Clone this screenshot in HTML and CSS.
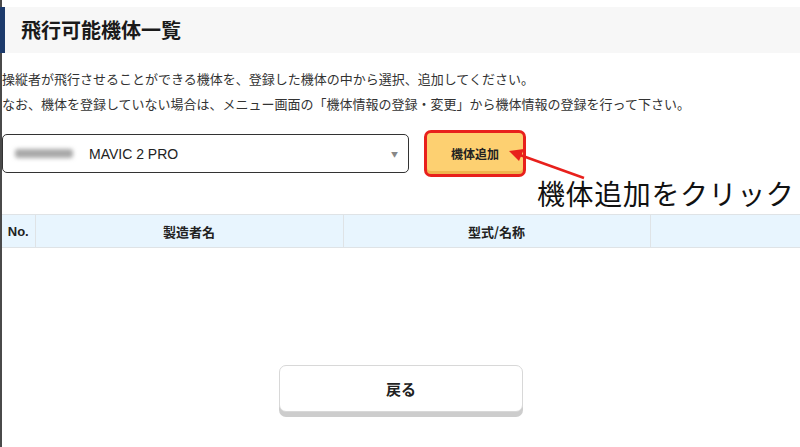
FILE: index.html
```html
<!DOCTYPE html>
<html lang="ja">
<head>
  <meta charset="utf-8">
  <title>飛行可能機体一覧</title>
  <link rel="stylesheet" href="styles.css">
</head>
<body>
  <div class="page">
    <h1 class="page-title">飛行可能機体一覧</h1>

    <p class="lead">
      操縦者が飛行させることができる機体を、登録した機体の中から選択、追加してください。<br>
      なお、機体を登録していない場合は、メニュー画面の「機体情報の登録・変更」から機体情報の登録を行って下さい。
    </p>

    <div class="picker">
      <div class="select">
        <span class="maker"></span>
        <span class="model">MAVIC 2 PRO</span>
        <span class="caret">▼</span>
      </div>
      <button class="add-btn">機体追加</button>
    </div>

    <table class="list">
      <thead>
        <tr>
          <th class="col-no">No.</th>
          <th class="col-maker">製造者名</th>
          <th class="col-model">型式/名称</th>
          <th></th>
        </tr>
      </thead>
      <tbody>
        <tr class="empty"><td colspan="4"></td></tr>
      </tbody>
    </table>

    <div class="footer">
      <button class="back-btn">戻る</button>
    </div>

    <!-- callout pointing at the add button -->
    <svg class="callout-arrow" width="800" height="447" viewBox="0 0 800 447">
      <line x1="584" y1="178" x2="520" y2="155" stroke="#e8201c" stroke-width="2.5"/>
      <polygon points="509,151 524,149 519,161" fill="#e8201c"/>
    </svg>
    <div class="callout">機体追加をクリック</div>
  </div>
</body>
</html>
```

FILE: styles.css
```css
* {
  box-sizing: border-box;
}
body {
  margin: 0;
  background: #fff;
  color: #222;
  font-family: "Noto Sans CJK JP", "Liberation Sans", sans-serif;
}
.page {
  position: relative;
  min-height: 447px;
  padding-top: 7px;
  border-left: 2px solid #4a4a4a;
}
.page-title {
  margin: 0 0 0 -2px;
  height: 46px;
  padding-left: 16px;
  background: #f7f7f7;
  border-left: 5px solid #1c3a6b;
  font-size: 20px;
  font-weight: bold;
  line-height: 46px;
  color: #1a1a1a;
}
.lead {
  margin: 13px 0 0;
  font-size: 13px;
  line-height: 25px;
  color: #333;
}
.picker {
  display: flex;
  align-items: center;
  gap: 15px;
  margin-top: 14px;
  height: 47px;
}
.select {
  display: flex;
  align-items: center;
  width: 407px;
  height: 39px;
  padding: 0 10px 0 12px;
  border: 1px solid #333;
  border-radius: 5px;
  background: #fff;
}
/* maker name is masked */
.maker {
  width: 58px;
  height: 9px;
  border-radius: 3px;
  background: #a8a8a8;
  filter: blur(2px);
}
.model {
  flex: 1;
  margin-left: 16px;
  font-family: "Liberation Sans", Arial, sans-serif;
  font-size: 14px;
  color: #222;
}
.caret {
  font-size: 7px;
  color: #888;
}
.add-btn {
  width: 102px;
  height: 47px;
  border: 3px solid #e8201c;
  border-radius: 7px;
  background: #fdd071;
  box-shadow: inset 0 -3px 0 #efb54f;
  font-family: inherit;
  font-size: 12px;
  font-weight: bold;
  color: #222;
}
.list {
  width: 100%;
  margin-top: 37px;
  border-collapse: collapse;
  font-size: 13px;
}
.list th {
  height: 33px;
  background: #e8f5fe;
  border: 1px solid #dfe3e6;
  font-weight: bold;
  color: #222;
}
.list th:first-child {
  border-left: none;
}
.list th:last-child {
  border-right: none;
}
.col-no {
  width: 33px;
  font-family: "Liberation Sans", Arial, sans-serif;
}
.col-maker {
  width: 308px;
}
.col-model {
  width: 307px;
}
.empty td {
  height: 48px;
}
.footer {
  display: flex;
  justify-content: center;
  margin-top: 69px;
}
.back-btn {
  width: 244px;
  height: 47px;
  border: 1px solid #d8d8d8;
  border-radius: 7px;
  background: #fff;
  box-shadow: 0 5px 0 #cdcdcd;
  font-family: inherit;
  font-size: 15px;
  font-weight: bold;
  color: #222;
}
.callout-arrow {
  position: absolute;
  left: -2px;
  top: 0;
  pointer-events: none;
}
.callout {
  position: absolute;
  left: 535px;
  top: 173px;
  font-size: 28px;
  letter-spacing: 0.6px;
  line-height: 40px;
  color: #111;
}
```
